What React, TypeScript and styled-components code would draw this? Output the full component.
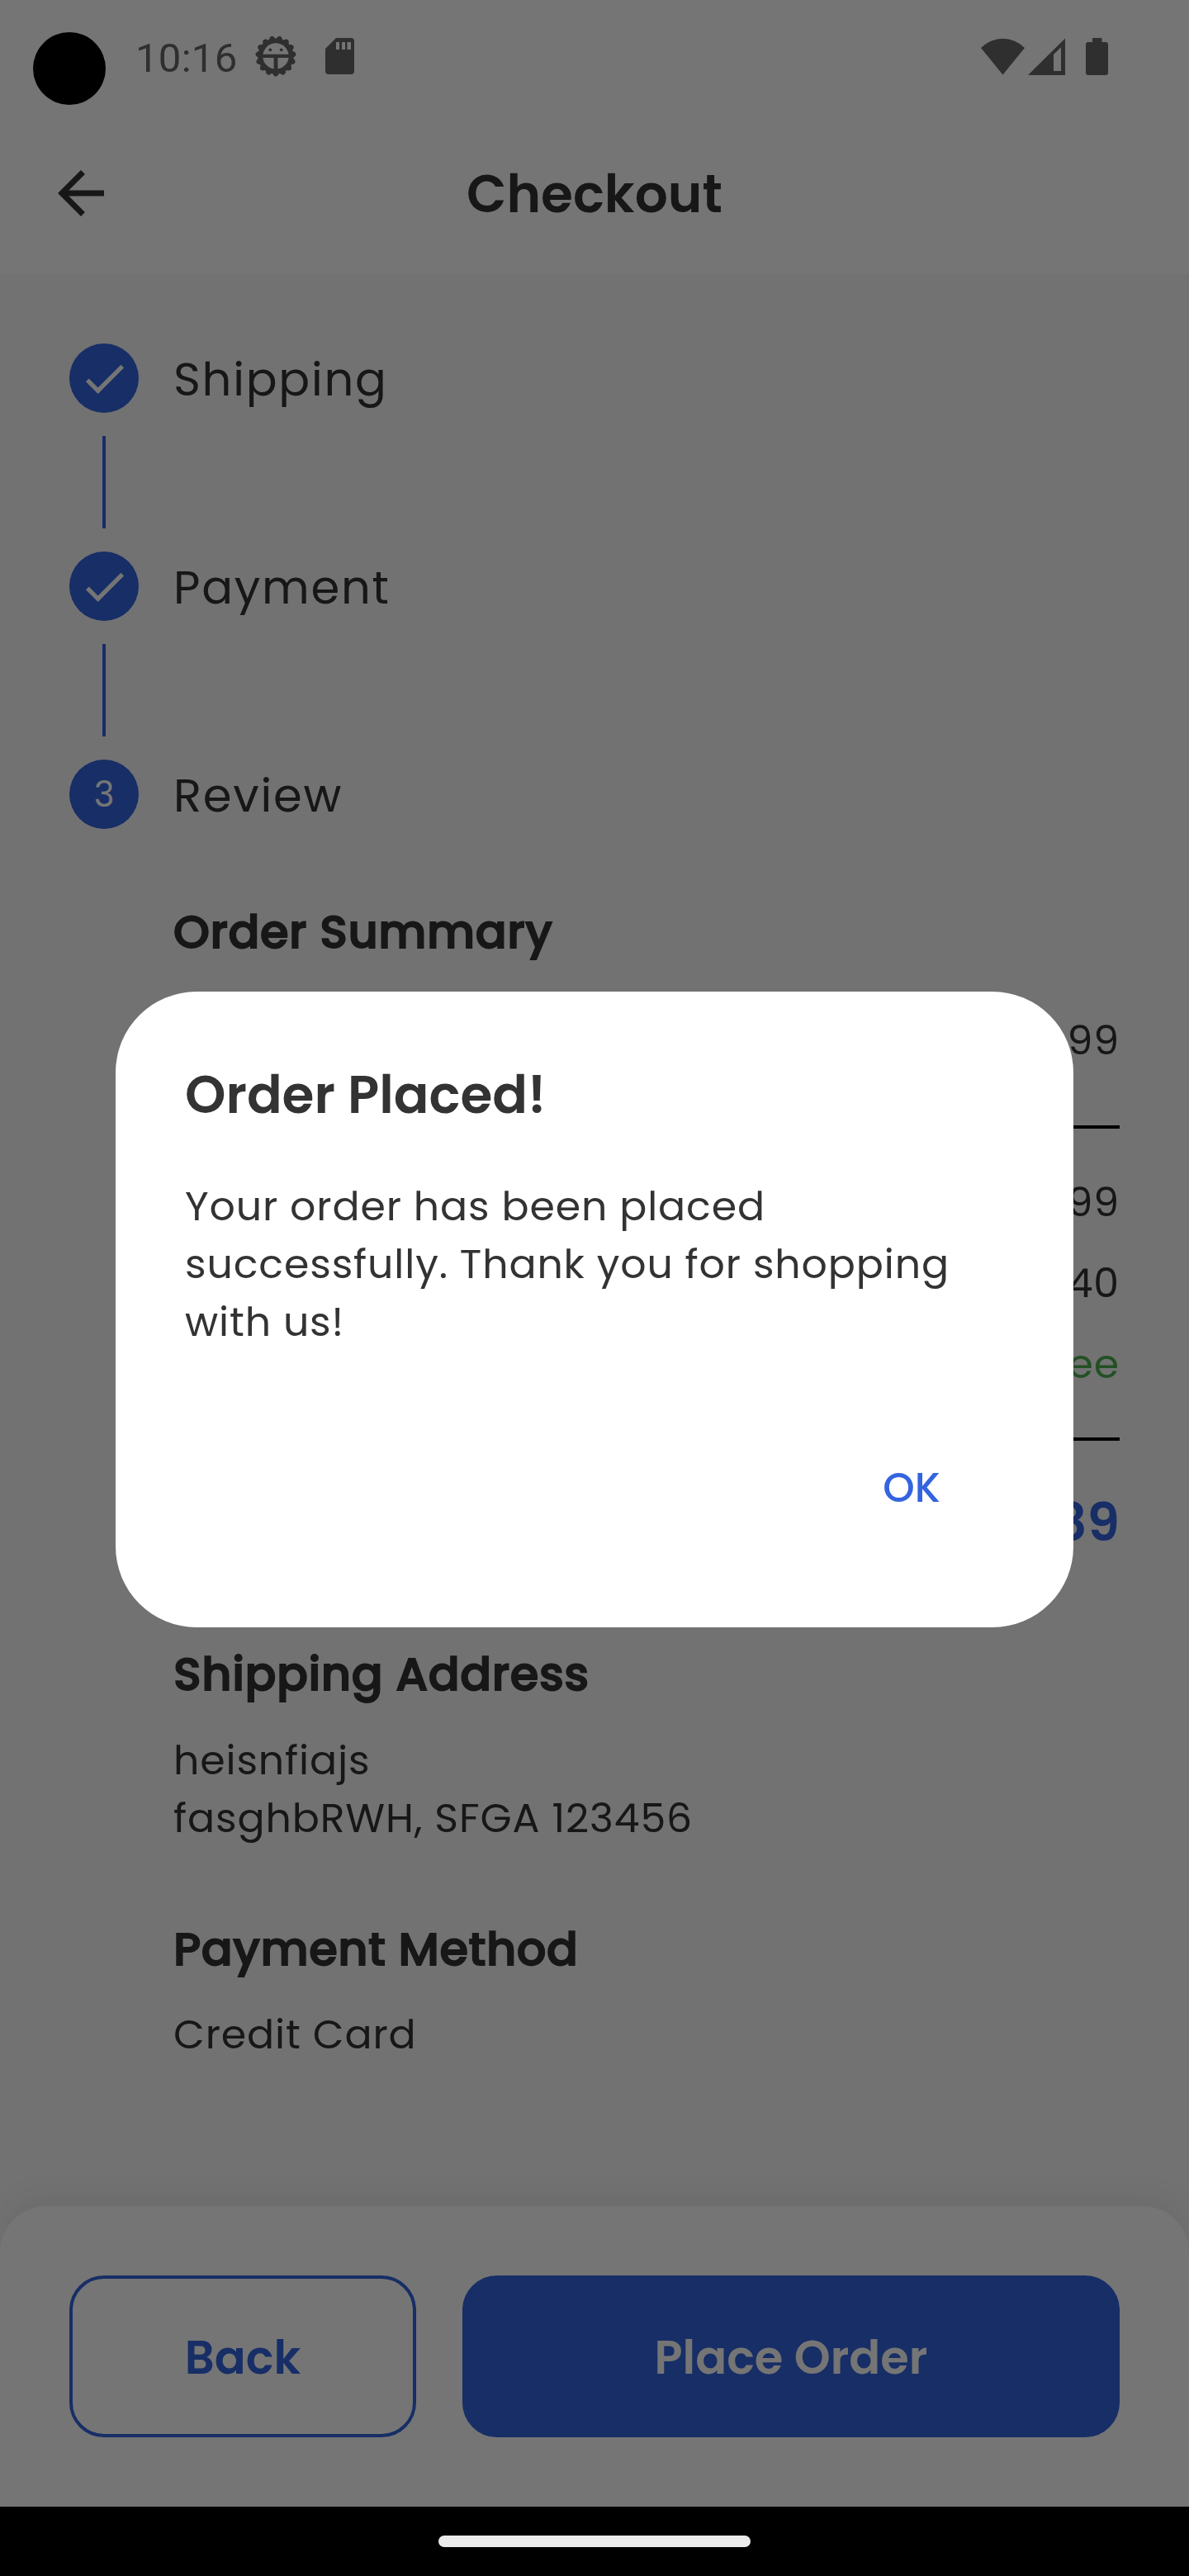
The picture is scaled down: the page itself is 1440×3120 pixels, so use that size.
import React from "react";
import styled, { createGlobalStyle } from "styled-components";

const colors = {
  primary: "#3464df",
  text: "#333333",
  status: "#666666",
  surface: "#ffffff",
  page: "#f8f8f8",
  success: "#4caf50",
};

const GlobalStyle = createGlobalStyle`
  * { box-sizing: border-box; }
  body {
    margin: 0;
    background: #000;
    font-family: Poppins, "Open Sans", sans-serif;
    color: ${colors.text};
  }
`;

const Screen = styled.div`
  position: relative;
  width: 1440px;
  height: 3120px;
  overflow: hidden;
  display: flex;
  flex-direction: column;
  background: ${colors.page};
`;

const StatusBar = styled.div`
  flex: none;
  display: flex;
  align-items: center;
  justify-content: space-between;
  height: 136px;
  padding: 0 98px 0 164px;
  background: ${colors.surface};
  color: ${colors.status};
`;

const StatusGroup = styled.div<{ $gap: number }>`
  display: flex;
  align-items: center;
  gap: ${(p) => p.$gap}px;
`;

const Clock = styled.span`
  padding-top: 6px;
  margin-right: 21px;
  font: 400 49px/60px Roboto, sans-serif;
  letter-spacing: 0.3px;
`;

const StatusIcon = styled.svg`
  display: block;
  fill: currentColor;
`;

const AppBar = styled.header`
  flex: none;
  display: grid;
  grid-template-columns: 84px 1fr 84px;
  align-items: center;
  height: 196px;
  padding: 0 56px;
  background: ${colors.surface};
`;

const AppBarIcon = styled.svg`
  width: 84px;
  height: 84px;
  fill: ${colors.text};
`;

const AppBarTitle = styled.h1`
  margin: 0;
  padding-top: 2px;
  text-align: center;
  font-size: 63px;
  font-weight: 600;
  line-height: 84px;
`;

const Stepper = styled.main`
  flex: 1;
  display: flex;
  flex-direction: column;
  padding: 56px 84px 0;
`;

const StepHeader = styled.div`
  display: flex;
  align-items: center;
  gap: 42px;
  height: 140px;
`;

const StepBadge = styled.div`
  display: flex;
  align-items: center;
  justify-content: center;
  width: 84px;
  height: 84px;
  border-radius: 50%;
  background: ${colors.primary};
  color: ${colors.surface};
  font-size: 42px;
  line-height: 60px;
`;

const StepNumber = styled.span`
  padding-top: 2px;
`;

const CheckIcon = styled.svg`
  width: 63px;
  height: 63px;
  fill: ${colors.surface};
`;

const StepLabel = styled.span`
  padding-top: 4px;
  font-size: 56px;
  line-height: 84px;
  letter-spacing: 1.75px;
`;

const StepLine = styled.div`
  width: 4px;
  height: 112px;
  margin-left: 40px;
  background: ${colors.primary};
`;

const StepContent = styled.div`
  display: flex;
  flex-direction: column;
  margin-left: 126px;
  padding-top: 56px;
`;

const Section = styled.section<{ $gap: number; $after: number }>`
  display: flex;
  flex-direction: column;
  gap: ${(p) => p.$gap}px;
  margin-bottom: ${(p) => p.$after}px;
`;

const SectionTitle = styled.h2`
  margin: -1px 0 1px;
  font-size: 56px;
  font-weight: 500;
  line-height: 84px;
  letter-spacing: 0.525px;
  -webkit-text-stroke: 1.8px currentColor;
`;

const Body = styled.p`
  margin: 0;
  font-size: 49px;
  line-height: 70px;
  letter-spacing: 0.875px;
`;

const Rows = styled.div`
  display: flex;
  flex-direction: column;
  gap: 28px;
`;

const Amount = styled(Body)<{ $free?: boolean }>`
  text-align: right;
  color: ${(p) => (p.$free ? colors.success : "inherit")};
`;

const Total = styled.p`
  margin: 0;
  padding-top: 3px;
  text-align: right;
  color: ${colors.primary};
  font-size: 63px;
  font-weight: 600;
  line-height: 84px;
`;

const Divider = styled.hr`
  width: 100%;
  height: 4px;
  margin: 0;
  border: 0;
  background: #000;
`;

const BottomBar = styled.footer`
  flex: none;
  display: flex;
  gap: 56px;
  padding: 84px;
  border-radius: 56px 56px 0 0;
  background: ${colors.surface};
  box-shadow: 0 -14px 35px rgba(0, 0, 0, 0.06);
`;

const Button = styled.button<{ $filled?: boolean }>`
  flex: ${(p) => (p.$filled ? "1" : "0 0 420px")};
  height: 196px;
  padding: 4px 0 0;
  border: 4px solid ${colors.primary};
  border-radius: 42px;
  background: ${(p) => (p.$filled ? colors.primary : "transparent")};
  color: ${(p) => (p.$filled ? colors.surface : colors.primary)};
  font: 600 56px/84px Poppins, "Open Sans", sans-serif;
`;

const NavBar = styled.div`
  position: relative;
  z-index: 3;
  flex: none;
  display: flex;
  justify-content: center;
  height: 84px;
  padding-top: 35px;
  background: #000;
`;

const NavHandle = styled.div`
  width: 378px;
  height: 14px;
  border-radius: 7px;
  background: #ebebeb;
`;

const Camera = styled.div`
  position: absolute;
  z-index: 3;
  top: 39px;
  left: 40px;
  width: 88px;
  height: 88px;
  border-radius: 50%;
  background: #000;
`;

const Scrim = styled.div`
  position: absolute;
  z-index: 2;
  inset: 0;
  display: flex;
  justify-content: center;
  padding-top: 1201px;
  background: rgba(0, 0, 0, 0.54);
`;

const Dialog = styled.div`
  display: flex;
  flex-direction: column;
  width: 1160px;
  height: 770px;
  padding: 84px;
  border-radius: 98px;
  background: ${colors.surface};
`;

const DialogTitle = styled.h2`
  margin: 0 0 59px;
  font-size: 63px;
  font-weight: 600;
  line-height: 82px;
`;

const DialogActions = styled.div`
  display: flex;
  justify-content: flex-end;
  margin-top: 83px;
`;

const TextButton = styled.button`
  width: 224px;
  height: 168px;
  padding: 0 0 2px;
  border: 0;
  background: none;
  color: ${colors.primary};
  font: 500 49px/70px Poppins, "Open Sans", sans-serif;
`;

function BugIcon() {
  const teeth = Array.from({ length: 15 }, (_, i) => i * 24 + 12);
  return (
    <StatusIcon width="50" height="50" viewBox="-25 -25 50 50">
      <circle r="18.5" fill="none" stroke="currentColor" strokeWidth="5.6" />
      {teeth.map((angle) => (
        <path
          key={angle}
          d="M-4.8 -20L-2.3 -23.6Q0 -25.8 2.3 -23.6L4.8 -20Z"
          transform={`rotate(${angle})`}
        />
      ))}
      <path d="M-17 -2.2H17V2H2.4V17H-2.4V2H-17Z" />
      <circle cx="-6.7" cy="-7.7" r="1.9" />
      <circle cx="6.7" cy="-7.7" r="1.9" />
    </StatusIcon>
  );
}

function SdCardIcon() {
  return (
    <StatusIcon width="35" height="44" viewBox="0 0 35 44">
      <path
        fillRule="evenodd"
        d="M13 0H31Q35 0 35 4V40Q35 44 31 44H4Q0 44 0 40V13ZM13 5V14H17V5ZM20 5V14H24V5ZM26.5 5V14H31V5Z"
      />
    </StatusIcon>
  );
}

function WifiIcon() {
  return (
    <StatusIcon width="53" height="45" viewBox="0 0 53 45">
      <path d="M0 12A37 37 0 0 1 53 12L26.5 44.5Z" />
    </StatusIcon>
  );
}

function SignalIcon() {
  return (
    <StatusIcon width="45" height="45" viewBox="0 0 45 45">
      <path fillRule="evenodd" d="M0 45L45 0.5V45ZM31 20V40H40V11.3Z" />
    </StatusIcon>
  );
}

function BatteryIcon() {
  return (
    <StatusIcon width="27" height="45" viewBox="0 0 27 45">
      <path d="M8 0H19.5V5H24Q27 5 27 8V42Q27 45 24 45H3Q0 45 0 42V8Q0 5 3 5H8Z" />
    </StatusIcon>
  );
}

function Check() {
  return (
    <CheckIcon viewBox="0 0 24 24">
      <path d="M9 16.17L4.83 12l-1.42 1.41L9 19 21 7l-1.41-1.41z" />
    </CheckIcon>
  );
}

const steps = [
  { label: "Shipping", done: true },
  { label: "Payment", done: true },
  { label: "Review", done: false },
];

export default function App() {
  return (
    <Screen>
      <GlobalStyle />
      <StatusBar>
        <StatusGroup $gap={35}>
          <StatusGroup $gap={0}>
            <Clock>10:16</Clock>
            <BugIcon />
          </StatusGroup>
          <SdCardIcon />
        </StatusGroup>
        <StatusGroup $gap={25}>
          <StatusGroup $gap={4}>
            <WifiIcon />
            <SignalIcon />
          </StatusGroup>
          <BatteryIcon />
        </StatusGroup>
      </StatusBar>
      <AppBar>
        <AppBarIcon viewBox="0 0 24 24">
          <path d="M20 11H7.83l5.59-5.59L12 4l-8 8 8 8 1.41-1.41L7.83 13H20v-2z" />
        </AppBarIcon>
        <AppBarTitle>Checkout</AppBarTitle>
      </AppBar>
      <Stepper>
        {steps.map((step, i) => (
          <React.Fragment key={step.label}>
            {i > 0 && <StepLine />}
            <StepHeader>
              <StepBadge>{step.done ? <Check /> : <StepNumber>{i + 1}</StepNumber>}</StepBadge>
              <StepLabel>{step.label}</StepLabel>
            </StepHeader>
          </React.Fragment>
        ))}
        <StepContent>
          <Section $gap={53} $after={101}>
            <SectionTitle>Order Summary</SectionTitle>
            <Section $gap={54} $after={0}>
              <Section $gap={68} $after={0}>
                <Amount>99</Amount>
                <Divider />
              </Section>
              <Rows>
                <Amount>99</Amount>
                <Amount>40</Amount>
                <Amount $free>Free</Amount>
              </Rows>
              <Divider />
              <Total>89</Total>
            </Section>
          </Section>
          <Section $gap={26} $after={83}>
            <SectionTitle>Shipping Address</SectionTitle>
            <Body>
              heisnfiajs
              <br />
              fasghbRWH, SFGA 123456
            </Body>
          </Section>
          <Section $gap={25} $after={0}>
            <SectionTitle>Payment Method</SectionTitle>
            <Body>Credit Card</Body>
          </Section>
        </StepContent>
      </Stepper>
      <BottomBar>
        <Button>Back</Button>
        <Button $filled>Place Order</Button>
      </BottomBar>
      <NavBar>
        <NavHandle />
      </NavBar>
      <Scrim>
        <Dialog role="dialog">
          <DialogTitle>Order Placed!</DialogTitle>
          <Body>Your order has been placed successfully. Thank you for shopping with us!</Body>
          <DialogActions>
            <TextButton>OK</TextButton>
          </DialogActions>
        </Dialog>
      </Scrim>
      <Camera />
    </Screen>
  );
}
